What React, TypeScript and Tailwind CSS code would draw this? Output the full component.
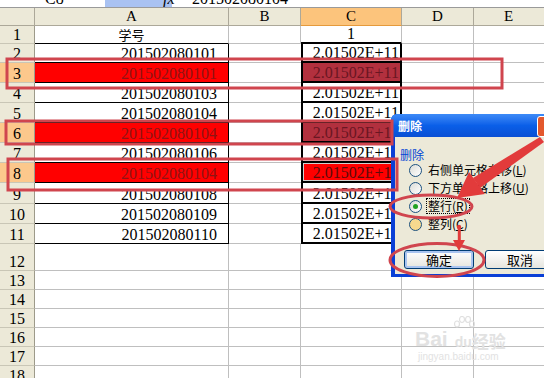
import React from 'react';

type Mark = 'none' | 'dark' | 'active';

interface RowDef {
  n: number;
  h: string;
  a?: string;
  c?: string;
  mark?: Mark;
}

const ROWS: RowDef[] = [
  { n: 1, h: 'h-[18px]', a: '学号', c: '1' },
  { n: 2, h: 'h-[19px]', a: '201502080101', c: '2.01502E+11' },
  { n: 3, h: 'h-[20px]', a: '201502080101', c: '2.01502E+11', mark: 'dark' },
  { n: 4, h: 'h-[20px]', a: '201502080103', c: '2.01502E+11' },
  { n: 5, h: 'h-[20px]', a: '201502080104', c: '2.01502E+11' },
  { n: 6, h: 'h-[20px]', a: '201502080104', c: '2.01502E+11', mark: 'dark' },
  { n: 7, h: 'h-[20px]', a: '201502080106', c: '2.01502E+11' },
  { n: 8, h: 'h-[20px]', a: '201502080104', c: '2.01502E+11', mark: 'active' },
  { n: 9, h: 'h-[21px]', a: '201502080108', c: '2.01502E+11' },
  { n: 10, h: 'h-[20px]', a: '201502080109', c: '2.01502E+11' },
  { n: 11, h: 'h-[20px]', a: '201502080110', c: '2.01502E+11' },
  { n: 12, h: 'h-[27px]' },
  { n: 13, h: 'h-[19px]' },
  { n: 14, h: 'h-[19px]' },
  { n: 15, h: 'h-[19px]' },
  { n: 16, h: 'h-[19px]' },
  { n: 17, h: 'h-[19px]' },
  { n: 18, h: 'h-[19px]' },
];

const SheetRow = ({ row }: { row: RowDef }) => {
  const inTable = row.n >= 2 && row.n <= 11;
  const marked = row.mark === 'dark' || row.mark === 'active';

  const aCls =
    row.n === 1
      ? 'justify-center border-r-[#bfbfbf] border-b-black'
      : inTable
      ? 'justify-end pr-[11px] border-black'
      : 'border-[#bfbfbf]';

  let cCls = 'border-r border-b border-[#bfbfbf]';
  if (row.n === 1) cCls = 'justify-center border-r border-b-2 border-r-[#bfbfbf] border-b-black';
  if (inTable) cCls = 'justify-end pr-[1px] border-x-2 border-b-2 border-black';

  let cFill = 'bg-white text-black';
  if (row.mark === 'dark') cFill = 'bg-[#b2303e] text-[#6a1622]';
  if (row.mark === 'active') cFill = 'bg-[#ff0000] text-[#5c0b0b] shadow-[inset_0_0_0_1px_#cfcfcf]';

  return (
    <div className={`flex ${row.h}`}>
      <div
        className={`w-[35px] shrink-0 flex items-end justify-center border-r border-b border-r-[#9d9a8a] border-b-[#c9c6b6] ${
          marked ? 'bg-[#fcc88c]' : 'bg-[#ece9d8]'
        }`}
      >
        <span className="leading-4">{row.n}</span>
      </div>
      <div
        className={`w-[194px] shrink-0 flex items-end border-r border-b ${aCls} ${
          marked ? 'bg-[#ff0000] text-[#8e1414]' : 'bg-white'
        }`}
      >
        {row.n === 1 ? (
          <span className="font-['Noto_Sans_CJK_SC',sans-serif] text-[13px] leading-4">{row.a}</span>
        ) : (
          <span className="leading-4">{row.a}</span>
        )}
      </div>
      <div className={`w-[72px] shrink-0 bg-white border-b border-[#bfbfbf] ${inTable ? '' : 'border-r'}`} />
      <div className={`w-[101px] shrink-0 flex items-end overflow-hidden ${cCls} ${cFill}`}>
        <span className="leading-4 whitespace-nowrap">{row.c}</span>
      </div>
      <div className="w-[72px] shrink-0 bg-white border-r border-b border-[#bfbfbf]" />
      <div className="w-[80px] shrink-0 bg-white border-r border-b border-[#bfbfbf]" />
    </div>
  );
};

const Radio = ({ label, keyChar, checked, hover, focus }: { label: string; keyChar: string; checked?: boolean; hover?: boolean; focus?: boolean }) => (
  <div className="h-[18px] flex items-center pl-[14px] gap-[5px]">
    <span
      className={`w-[13px] h-[13px] rounded-full border border-[#1c5180] flex items-center justify-center ${
        hover ? 'bg-[#f6d98e]' : 'bg-linear-to-br from-[#dcdcd7] to-white'
      }`}
    >
      {checked && <span className="w-[5px] h-[5px] rounded-full bg-[#21a121]" />}
    </span>
    <span className={`text-[12px] leading-[14px] px-[1px] ${focus ? 'outline-1 outline-dotted outline-black' : ''}`}>
      {label}(<span className="underline">{keyChar}</span>)
    </span>
  </div>
);

const Dialog = () => (
  <div className="absolute left-[391px] top-[114px] w-[170px] h-[163px] bg-[#0a3fd6] rounded-tl-[6px] flex flex-col font-['Noto_Sans_CJK_SC',sans-serif]">
    <div className="relative h-[23px] shrink-0 rounded-tl-[6px] bg-linear-to-b from-[#3d8af7] via-[#0a5fe8] to-[#0a4fd4] flex items-center pl-[7px]">
      <span className="text-white font-bold text-[12px] leading-none">删除</span>
      <span className="absolute left-[146px] top-[2px] w-[21px] h-[21px] rounded-[3px] border border-white bg-[#e3582d]" />
    </div>
    <div className="flex-1 ml-[4px] mb-[3px] bg-[#ece9d8] flex flex-col pt-[12px] text-black">
      <div className="h-[12px] pl-[5px] text-[12px] leading-[12px] text-[#0046d5]">删除</div>
      <Radio label="右侧单元格左移" keyChar="L" />
      <Radio label="下方单元格上移" keyChar="U" />
      <Radio label="整行" keyChar="R" checked focus />
      <Radio label="整列" keyChar="C" hover />
      <div className="flex gap-[11px] pl-[9px] mt-[17px]">
        <button className="w-[70px] h-[19px] rounded-[3px] border border-[#003c74] bg-linear-to-b from-white to-[#e6e5de] shadow-[inset_0_0_0_2px_#a9c4f0] text-[13px] leading-none">
          确定
        </button>
        <button className="w-[70px] h-[19px] rounded-[3px] border border-[#003c74] bg-linear-to-b from-white to-[#e6e5de] text-[13px] leading-none">
          取消
        </button>
      </div>
    </div>
  </div>
);

const Annotations = () => (
  <svg className="absolute left-0 top-0 pointer-events-none" width={544} height={378} viewBox="0 0 544 378">
    <g fill="none" stroke="#d0454e" strokeWidth={3}>
      <rect x={7} y={59} width={495} height={29} />
      <rect x={6} y={121} width={386} height={23} />
      <rect x={8} y={159} width={389} height={31} />
      <ellipse cx={431} cy={206.5} rx={41} ry={11.5} />
      <ellipse cx={437} cy={260} rx={47} ry={16.5} />
    </g>
    <g fill="#e23b3b">
      <polygon points="540,137 544,142 480,188 473,178" />
      <polygon points="457,198 469,172 485,194" />
      <circle cx={459} cy={227} r={2.2} />
      <rect x={457.8} y={227} width={3} height={15} />
      <polygon points="459,251 453,240 465,240" />
    </g>
  </svg>
);

const Watermark = () => (
  <div className="absolute left-[415px] top-[316px] w-[110px] text-[#e2e2e2] select-none">
    <svg className="absolute left-[37px] top-0" width={24} height={18} viewBox="0 0 24 18">
      <g fill="none" stroke="#e0e0e0" strokeWidth={1.2}>
        <ellipse cx={5} cy={8} rx={2.5} ry={3} />
        <ellipse cx={10} cy={3.5} rx={2.5} ry={3} />
        <ellipse cx={16} cy={3.5} rx={2.5} ry={3} />
        <ellipse cx={20} cy={8} rx={2.5} ry={3} />
      </g>
    </svg>
    <div className="flex items-end pt-[12px] h-[33px]">
      <span className="font-['Liberation_Sans',sans-serif] font-bold text-[21px] leading-none">Bai</span>
      <span className="ml-[7px] font-['Liberation_Sans',sans-serif] font-bold text-[14px] leading-none">du</span>
      <span className="font-['Noto_Sans_CJK_SC',sans-serif] font-bold text-[17px] leading-none">经验</span>
    </div>
    <div className="mt-[3px] pl-[3px] font-['Liberation_Sans',sans-serif] text-[10px] leading-none">jingyan.baidu.com</div>
  </div>
);

export default function App() {
  return (
    <div className="relative w-[544px] h-[378px] overflow-hidden bg-white font-['Liberation_Serif',serif] text-[16px] text-black">
      <div className="h-[8px] flex border-b border-[#9a9a9a] overflow-hidden bg-white">
        <div className="w-[105px] shrink-0">
          <span className="block -mt-[9px] pl-[45px] leading-4">C8</span>
        </div>
        <div className="w-[67px] shrink-0 bg-[#a9c2f2]">
          <span className="block -mt-[9px] pl-[58px] leading-4 italic">fx</span>
        </div>
        <div className="flex-1">
          <span className="block -mt-[9px] pl-[20px] leading-4">201502080104</span>
        </div>
      </div>
      <div className="flex h-[18px]">
        <div className="w-[35px] shrink-0 bg-[#ece9d8] border-r border-b border-[#aca899]" />
        <div className="w-[194px] shrink-0 bg-[#ece9d8] border-r border-b border-[#aca899] flex items-center justify-center text-[15px]">A</div>
        <div className="w-[72px] shrink-0 bg-[#ece9d8] border-r border-b border-[#aca899] flex items-center justify-center text-[15px]">B</div>
        <div className="w-[101px] shrink-0 bg-[#fcc47c] border-r border-b border-r-[#aca899] border-b-[#e59a3c] flex items-center justify-center text-[15px]">C</div>
        <div className="w-[72px] shrink-0 bg-[#ece9d8] border-r border-b border-[#aca899] flex items-center justify-center text-[15px]">D</div>
        <div className="w-[80px] shrink-0 bg-[#ece9d8] border-r border-b border-[#aca899] flex items-center justify-center text-[15px] pr-[10px]">E</div>
      </div>
      {ROWS.map((r) => (
        <SheetRow key={r.n} row={r} />
      ))}
      <Watermark />
      <Dialog />
      <Annotations />
    </div>
  );
}
